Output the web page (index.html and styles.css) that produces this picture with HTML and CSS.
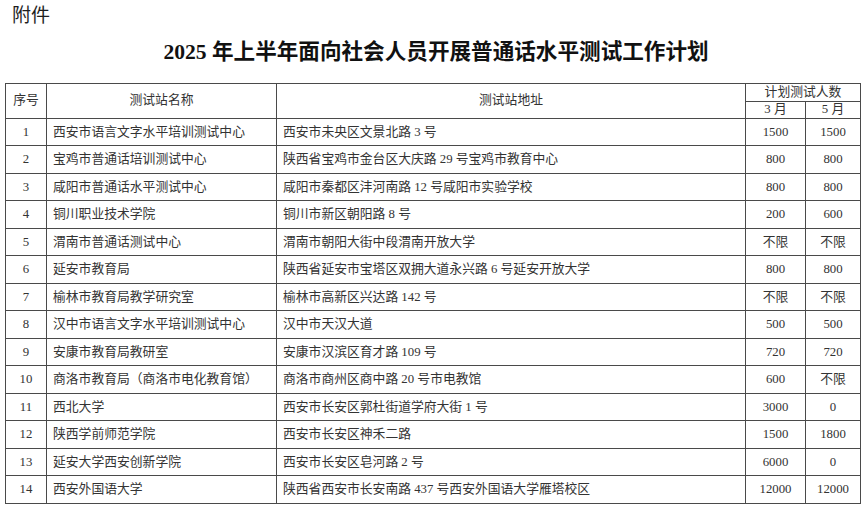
FILE: index.html
```html
<!DOCTYPE html>
<html lang="zh-CN">
<head>
<meta charset="utf-8">
<title>2025年上半年面向社会人员开展普通话水平测试工作计划</title>
<link rel="stylesheet" href="styles.css">
</head>
<body>
<div class="attach">附件</div>
<h1 class="title">2025 年上半年面向社会人员开展普通话水平测试工作计划</h1>
<table class="plan">
  <colgroup>
    <col class="c-no"><col class="c-name"><col class="c-addr"><col class="c-m3"><col class="c-m5">
  </colgroup>
  <thead>
    <tr class="h1">
      <th rowspan="2">序号</th>
      <th rowspan="2">测试站名称</th>
      <th rowspan="2">测试站地址</th>
      <th colspan="2">计划测试人数</th>
    </tr>
    <tr class="h2">
      <th>3 月</th>
      <th>5 月</th>
    </tr>
  </thead>
  <tbody>
    <tr><td class="n">1</td><td class="t">西安市语言文字水平培训测试中心</td><td class="t">西安市未央区文景北路 3 号</td><td class="n">1500</td><td class="n">1500</td></tr>
    <tr><td class="n">2</td><td class="t">宝鸡市普通话培训测试中心</td><td class="t">陕西省宝鸡市金台区大庆路 29 号宝鸡市教育中心</td><td class="n">800</td><td class="n">800</td></tr>
    <tr><td class="n">3</td><td class="t">咸阳市普通话水平测试中心</td><td class="t">咸阳市秦都区沣河南路 12 号咸阳市实验学校</td><td class="n">800</td><td class="n">800</td></tr>
    <tr><td class="n">4</td><td class="t">铜川职业技术学院</td><td class="t">铜川市新区朝阳路 8 号</td><td class="n">200</td><td class="n">600</td></tr>
    <tr><td class="n">5</td><td class="t">渭南市普通话测试中心</td><td class="t">渭南市朝阳大街中段渭南开放大学</td><td class="n">不限</td><td class="n">不限</td></tr>
    <tr><td class="n">6</td><td class="t">延安市教育局</td><td class="t">陕西省延安市宝塔区双拥大道永兴路 6 号延安开放大学</td><td class="n">800</td><td class="n">800</td></tr>
    <tr><td class="n">7</td><td class="t">榆林市教育局教学研究室</td><td class="t">榆林市高新区兴达路 142 号</td><td class="n">不限</td><td class="n">不限</td></tr>
    <tr><td class="n">8</td><td class="t">汉中市语言文字水平培训测试中心</td><td class="t">汉中市天汉大道</td><td class="n">500</td><td class="n">500</td></tr>
    <tr><td class="n">9</td><td class="t">安康市教育局教研室</td><td class="t">安康市汉滨区育才路 109 号</td><td class="n">720</td><td class="n">720</td></tr>
    <tr><td class="n">10</td><td class="t">商洛市教育局（商洛市电化教育馆）</td><td class="t">商洛市商州区商中路 20 号市电教馆</td><td class="n">600</td><td class="n">不限</td></tr>
    <tr><td class="n">11</td><td class="t">西北大学</td><td class="t">西安市长安区郭杜街道学府大街 1 号</td><td class="n">3000</td><td class="n">0</td></tr>
    <tr><td class="n">12</td><td class="t">陕西学前师范学院</td><td class="t">西安市长安区神禾二路</td><td class="n">1500</td><td class="n">1800</td></tr>
    <tr><td class="n">13</td><td class="t">延安大学西安创新学院</td><td class="t">西安市长安区皂河路 2 号</td><td class="n">6000</td><td class="n">0</td></tr>
    <tr><td class="n">14</td><td class="t">西安外国语大学</td><td class="t">陕西省西安市长安南路 437 号西安外国语大学雁塔校区</td><td class="n">12000</td><td class="n">12000</td></tr>
  </tbody>
</table>
</body>
</html>
```

FILE: styles.css
```css
html, body {
  margin: 0;
  padding: 0;
  background: #ffffff;
}
body {
  width: 864px;
  font-family: "Liberation Serif", "Noto Sans CJK SC", serif;
  color: #2a2a2a;
}
.attach {
  padding: 3px 0 0 12px;
  height: 22px;
  font-family: "Noto Sans CJK SC", sans-serif;
  font-size: 19px;
  line-height: 22px;
  color: #1e1e1e;
}
.title {
  margin: 14px 0 0 0;
  padding-left: 8px;
  height: 26px;
  font-family: "Liberation Serif", "Noto Sans CJK SC", serif;
  font-size: 21.6px;
  line-height: 26px;
  font-weight: 700;
  text-align: center;
  color: #111;
}
.plan {
  margin: 18px 0 0 5px;
  width: 855px;
  table-layout: fixed;
  border-collapse: collapse;
  font-size: 12.8px;
}
.c-no { width: 41px; }
.c-name { width: 230px; }
.c-addr { width: 469px; }
.c-m3 { width: 60px; }
.c-m5 { width: 55px; }
.plan th, .plan td {
  border: 1px solid #4a4a4a;
  padding: 0;
  white-space: nowrap;
  overflow: hidden;
  color: #333;
}
.plan th {
  font-weight: 400;
  text-align: center;
  line-height: 15px;
}
.plan tr.h1 { height: 17.5px; }
.plan tr.h2 { height: 17px; }
.plan tbody tr { height: 27.5px; }
.plan td { line-height: 16px; }
.plan td.n { text-align: center; }
.plan td.t { text-align: left; padding-left: 6px; }
```
